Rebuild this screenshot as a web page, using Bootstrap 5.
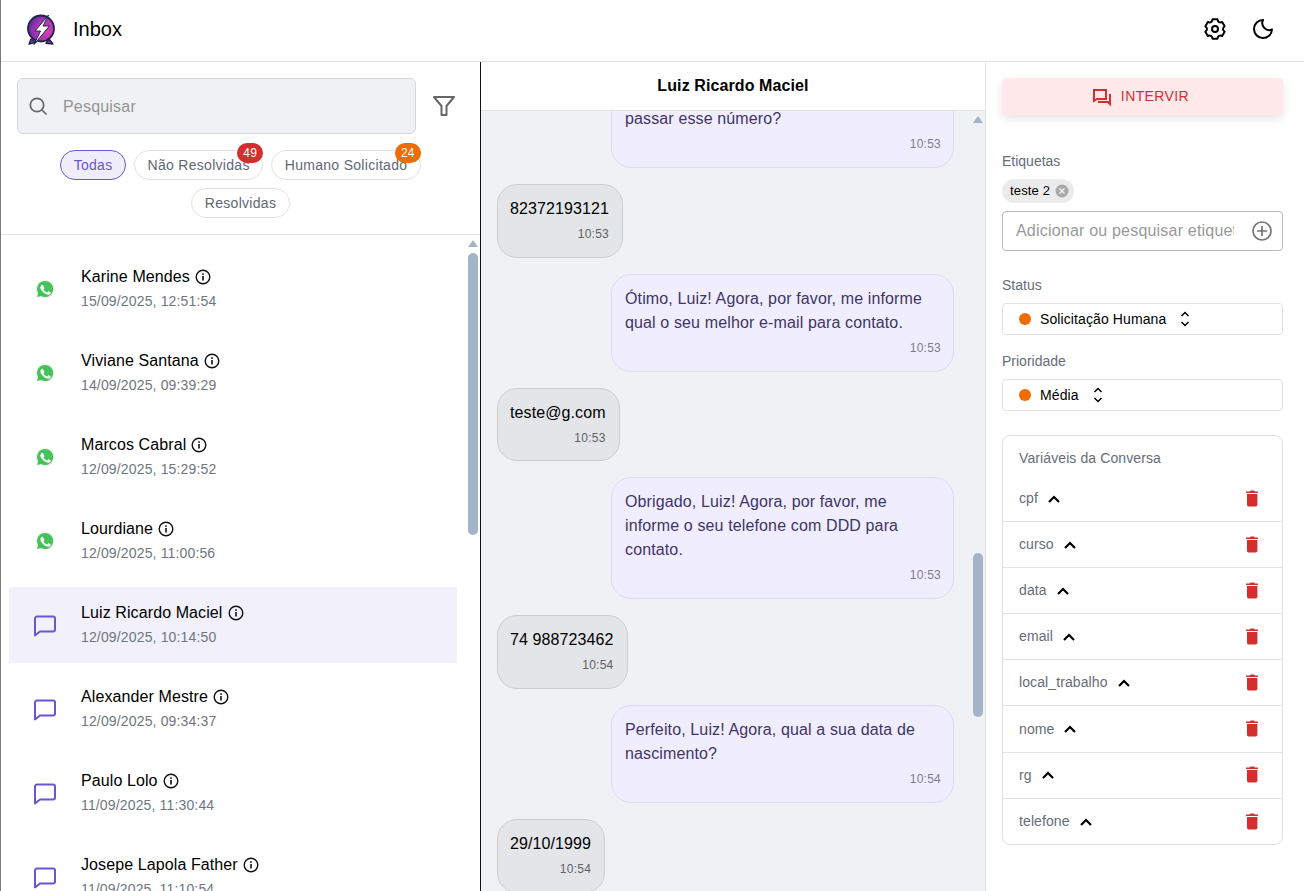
<!DOCTYPE html>
<html lang="pt">
<head>
<meta charset="utf-8">
<title>Inbox</title>
<link href="https://cdn.jsdelivr.net/npm/bootstrap@5.3.0/dist/css/bootstrap.min.css" rel="stylesheet">
<style>
html,body{height:100%;overflow:hidden}
body{font-family:"Liberation Sans",Arial,sans-serif;color:#000;background:#fff;border-left:1px solid #7a7a7a}
.app-shell{height:891px;overflow:hidden}
.top-bar{height:62px;border-bottom:1px solid #e0e0e0;padding:0 29px 3px 25px}
.top-title{font-size:20px;margin-left:17px;line-height:1}
.top-icons{gap:24px}
.panes{height:829px}
.left-pane{width:480px;flex:none;border-right:1px solid #111;position:relative}
.mid-pane{width:505px;flex:none;position:relative;border-right:1px solid #e2e2e2}
.right-pane{flex:1;padding:16px 21px 0 16px;min-width:0}
.filter-head{padding:16px 16px 0 16px;height:173px;border-bottom:1px solid #e2e2e2}
.search-box{width:399px;height:56px;background:#f0f1f5;border:1px solid #d5d6da;border-radius:6px;padding-left:11px;color:#949494;font-size:16px;letter-spacing:.2px}
.search-box span{margin-left:16px;margin-top:1px}
.filter-btn{margin-left:15px}
.chips{margin-top:16px;gap:8px}
.chip-item{position:relative;height:30px;border:1px solid #e2e2e2;border-radius:15px;padding:0 12.500px;font-size:14px;line-height:28px;color:#5f6773;letter-spacing:.3px;background:#fff}
.chip-on{background:#f1eefc;border-color:#6a55d8;color:#6a55d8}
.count-pill{position:absolute;top:-8px;right:-1px;height:20px;min-width:26px;border-radius:10px;color:#fff;font-size:12px;line-height:20px;text-align:center;letter-spacing:.3px}
.pill-red{background:#d32f2f}
.pill-orange{background:#ef6c00}
.convo-list{padding:16px 0 0 8px;overflow:hidden;height:656px}
.convo-row{width:448px;height:76px;margin-bottom:8px;padding:0 0 0 20px}
.convo-row.picked{background:#f2f0fb}
.convo-ico{width:32px;flex:none;display:flex;justify-content:center}
.convo-text{margin-left:20px;margin-top:-3px}
.convo-name{font-size:16px;line-height:24px;display:flex;align-items:center;gap:5px;letter-spacing:.1px}
.convo-date{font-size:14px;line-height:20px;margin-top:2px;color:#6f7682;letter-spacing:.15px}
.fake-track{position:absolute;width:10px}
.track-list{left:467px;top:176px}
.track-chat{left:492px;top:49px}
.fake-up{position:absolute;left:0;width:0;height:0;border-left:5px solid transparent;border-right:5px solid transparent;border-bottom:7px solid #a3b4c8}
.up-list{top:2px}
.up-chat{top:5px}
.fake-thumb{position:absolute;left:0;width:10px;background:#a3b4c8;border-radius:5px}
.thumb-list{top:15px;height:282px}
.thumb-chat{top:442px;height:164px}
.chat-title{height:49px;border-bottom:1px solid #e2e2e2;font-weight:700;font-size:16px;background:#fff;letter-spacing:.1px}
.chat-body{background:#f0f1f5;height:780px;overflow:hidden;padding:0 31px 0 16px}
.bubble-me{align-self:flex-end;width:343px;background:#f0eefe;border:1px solid #dcd8fb;border-radius:20px;padding:12px 12px 13px 13px;color:#3f3565;font-size:16px;line-height:24px;margin-top:16px;letter-spacing:.13px;flex:none}
.bubble-them{align-self:flex-start;background:#e4e5e9;border:1px solid #cdced2;border-radius:20px;padding:12px 13px 13px 12px;font-size:16px;line-height:24px;margin-top:16px;letter-spacing:.1px;flex:none}
.first-cut{margin-top:-40.800px}
.stamp{display:block;text-align:right;font-size:12px;line-height:17.800px;margin-top:5px;color:#5f5f66;letter-spacing:.25px}
.bubble-me .stamp{color:#7f7a92}
.intervene{height:37px;background:#ffe9ea;border-radius:4px;color:#d32f2f;font-size:14px;letter-spacing:.4px;box-shadow:0 4px 10px rgba(0,0,0,.1);gap:9px;border:0;width:100%;padding:0 4px 0 0}
.field-label{font-size:14px;line-height:20px;color:#666d78}
.label-tags{margin-top:36px}
.label-status{margin-top:24px}
.label-priority{margin-top:16px}
.tag-chip{height:24px;background:#ebebeb;border-radius:12px;padding:0 5px 0 8px;font-size:13px;width:72px;gap:5px;letter-spacing:.15px;margin-top:8px;white-space:nowrap}
.tag-chip svg{flex:none}
.tag-input{height:40px;border:1px solid #bbb;border-radius:4px;margin-top:8px;padding:0 10px 0 13px;font-size:16px;color:#999;overflow:hidden;letter-spacing:.2px}
.tag-input span{width:218px;overflow:hidden;white-space:nowrap;display:block}
.pick-box{height:32px;border:1px solid #e2e2e2;border-radius:4px;padding:0 16px;font-size:14px;margin-top:8px;letter-spacing:.1px}
.pick-dot{width:12px;height:12px;border-radius:50%;background:#ef6c00;margin-right:9px}
.pick-arrows{margin-left:13px}
.vars-box{border:1px solid #e2e2e2;border-radius:8px;margin-top:24px;height:410px;overflow:hidden}
.vars-title{font-size:14px;color:#666d78;padding:12px 16px 0;line-height:20px;height:40px;letter-spacing:.1px}
.var-row{height:46.100px;padding:0 22px 0 16px;font-size:14px;color:#666d78;border-bottom:1px solid #e2e2e2;gap:9px;letter-spacing:.1px}
.var-row:last-child{border-bottom:0}
.var-bin{margin-left:auto;margin-bottom:2px}
</style>
</head>
<body>
<div class="app-shell d-flex flex-column">
  <header class="top-bar d-flex align-items-center justify-content-between">
    <div class="d-flex align-items-center">
      <svg width="30" height="33" viewBox="0 0 30 33"><defs><radialGradient id="lg" cx=".75" cy=".6" r=".85"><stop offset="0" stop-color="#d640b0"/><stop offset=".55" stop-color="#a335b8"/><stop offset="1" stop-color="#4b2a8f"/></radialGradient></defs><path d="M5 26 3 31l7-1.800zM23 26l4 5-7-.800z" fill="#8a2fa8" stroke="#1e2547" stroke-width="1.400" stroke-linejoin="round"/><circle cx="15" cy="15.500" r="13" fill="url(#lg)" stroke="#1e2547" stroke-width="1.800"/><path d="M22.500 2 9 18h5.500L8 31.500 23.500 13H17z" fill="#fff" stroke="#1e2547" stroke-width="1" stroke-linejoin="round"/></svg>
      <span class="top-title">Inbox</span>
    </div>
    <div class="d-flex align-items-center top-icons">
      <svg width="24" height="24" viewBox="0 0 24 24" fill="none" stroke="#000" stroke-width="2" stroke-linecap="round" stroke-linejoin="round"><path d="M9.580 2.300H14.420Q15.200 6.460 19.190 5.050L21.610 9.240Q18.400 12 21.610 14.760L19.190 18.950Q15.200 17.540 14.420 21.700H9.580Q8.800 17.540 4.810 18.950L2.390 14.760Q5.600 12 2.390 9.240L4.810 5.050Q8.800 6.460 9.580 2.300z"/><circle cx="12" cy="12" r="3"/></svg>
      <svg width="24" height="24" viewBox="0 0 24 24" fill="none" stroke="#000" stroke-width="2" stroke-linecap="round" stroke-linejoin="round"><path d="M12 3a9 9 0 1 0 9 9.500A7 7 0 0 1 12 3z"/></svg>
    </div>
  </header>
  <div class="panes d-flex">
    <aside class="left-pane">
      <div class="filter-head">
        <div class="d-flex align-items-center">
          <div class="search-box d-flex align-items-center">
            <svg width="18" height="18" viewBox="0 0 18 18" fill="none" stroke="#666" stroke-width="1.700" stroke-linecap="round"><circle cx="8" cy="8" r="6.700"/><path d="m13 13 4 4"/></svg>
            <span>Pesquisar</span>
          </div>
          <svg class="filter-btn" width="26" height="26" viewBox="0 0 26 26" fill="none" stroke="#666" stroke-width="2" stroke-linejoin="round"><path d="M3 4h20l-7.500 9v9h-5v-9z"/></svg>
        </div>
        <div class="chips d-flex flex-wrap justify-content-center">
          <div class="chip-item chip-on">Todas</div>
          <div class="chip-item">Não Resolvidas<span class="count-pill pill-red">49</span></div>
          <div class="chip-item">Humano Solicitado<span class="count-pill pill-orange">24</span></div>
          <div class="chip-item">Resolvidas</div>
        </div>
      </div>
      <div class="convo-list">
        <div class="convo-row d-flex align-items-center"><div class="convo-ico"><svg width="20" height="20" viewBox="0 0 20 20"><use href="#wa"/></svg></div><div class="convo-text"><div class="convo-name">Karine Mendes <svg width="16" height="16"><use href="#inf"/></svg></div><div class="convo-date">15/09/2025, 12:51:54</div></div></div>
        <div class="convo-row d-flex align-items-center"><div class="convo-ico"><svg width="20" height="20" viewBox="0 0 20 20"><use href="#wa"/></svg></div><div class="convo-text"><div class="convo-name">Viviane Santana <svg width="16" height="16"><use href="#inf"/></svg></div><div class="convo-date">14/09/2025, 09:39:29</div></div></div>
        <div class="convo-row d-flex align-items-center"><div class="convo-ico"><svg width="20" height="20" viewBox="0 0 20 20"><use href="#wa"/></svg></div><div class="convo-text"><div class="convo-name">Marcos Cabral <svg width="16" height="16"><use href="#inf"/></svg></div><div class="convo-date">12/09/2025, 15:29:52</div></div></div>
        <div class="convo-row d-flex align-items-center"><div class="convo-ico"><svg width="20" height="20" viewBox="0 0 20 20"><use href="#wa"/></svg></div><div class="convo-text"><div class="convo-name">Lourdiane <svg width="16" height="16"><use href="#inf"/></svg></div><div class="convo-date">12/09/2025, 11:00:56</div></div></div>
        <div class="convo-row picked d-flex align-items-center"><div class="convo-ico"><svg width="24" height="24"><use href="#msg"/></svg></div><div class="convo-text"><div class="convo-name">Luiz Ricardo Maciel <svg width="16" height="16"><use href="#inf"/></svg></div><div class="convo-date">12/09/2025, 10:14:50</div></div></div>
        <div class="convo-row d-flex align-items-center"><div class="convo-ico"><svg width="24" height="24"><use href="#msg"/></svg></div><div class="convo-text"><div class="convo-name">Alexander Mestre <svg width="16" height="16"><use href="#inf"/></svg></div><div class="convo-date">12/09/2025, 09:34:37</div></div></div>
        <div class="convo-row d-flex align-items-center"><div class="convo-ico"><svg width="24" height="24"><use href="#msg"/></svg></div><div class="convo-text"><div class="convo-name">Paulo Lolo <svg width="16" height="16"><use href="#inf"/></svg></div><div class="convo-date">11/09/2025, 11:30:44</div></div></div>
        <div class="convo-row d-flex align-items-center"><div class="convo-ico"><svg width="24" height="24"><use href="#msg"/></svg></div><div class="convo-text"><div class="convo-name">Josepe Lapola Father <svg width="16" height="16"><use href="#inf"/></svg></div><div class="convo-date">11/09/2025, 11:10:54</div></div></div>
      </div>
      <div class="fake-track track-list"><i class="fake-up up-list"></i><i class="fake-thumb thumb-list"></i></div>
    </aside>
    <main class="mid-pane">
      <div class="chat-title d-flex align-items-center justify-content-center">Luiz Ricardo Maciel</div>
      <div class="chat-body d-flex flex-column">
        <div class="bubble-me first-cut">Agora, pode me<br>passar esse número?<span class="stamp">10:53</span></div>
        <div class="bubble-them">82372193121<span class="stamp">10:53</span></div>
        <div class="bubble-me">Ótimo, Luiz! Agora, por favor, me informe qual o seu melhor e-mail para contato.<span class="stamp">10:53</span></div>
        <div class="bubble-them">teste@g.com<span class="stamp">10:53</span></div>
        <div class="bubble-me">Obrigado, Luiz! Agora, por favor, me informe o seu telefone com DDD para contato.<span class="stamp">10:53</span></div>
        <div class="bubble-them">74 988723462<span class="stamp">10:54</span></div>
        <div class="bubble-me">Perfeito, Luiz! Agora, qual a sua data de nascimento?<span class="stamp">10:54</span></div>
        <div class="bubble-them">29/10/1999<span class="stamp">10:54</span></div>
      </div>
      <div class="fake-track track-chat"><i class="fake-up up-chat"></i><i class="fake-thumb thumb-chat"></i></div>
    </main>
    <section class="right-pane">
      <button class="intervene d-flex align-items-center justify-content-center" type="button">
        <svg width="20" height="20" viewBox="0 0 20 20" fill="none" stroke="#d32f2f" stroke-width="2"><path d="M2 3h12v9H5l-3 2z"/><path d="M6 15h10l2 2V7"/></svg>
        INTERVIR
      </button>
      <div class="field-label label-tags">Etiquetas</div>
      <div class="tag-chip d-flex align-items-center"><span>teste 2</span><svg width="14" height="14" viewBox="0 0 14 14"><circle cx="7" cy="7" r="6.500" fill="#aaa"/><path d="m4.500 4.500 5 5m0-5-5 5" stroke="#eee" stroke-width="1.500"/></svg></div>
      <div class="tag-input d-flex align-items-center justify-content-between"><span>Adicionar ou pesquisar etiqueta</span><svg width="20" height="20" viewBox="0 0 20 20" fill="none" stroke="#757575" stroke-width="1.700"><circle cx="10" cy="10" r="9"/><path d="M10 5v10M5 10h10"/></svg></div>
      <div class="field-label label-status">Status</div>
      <div class="pick-box d-flex align-items-center"><i class="pick-dot"></i><span>Solicitação Humana</span><svg class="pick-arrows" width="12" height="18" viewBox="0 0 12 18" fill="none" stroke="#000" stroke-width="1.500"><path d="m2.500 6 3.500-3.500L9.500 6M2.500 12 6 15.500 9.500 12"/></svg></div>
      <div class="field-label label-priority">Prioridade</div>
      <div class="pick-box d-flex align-items-center"><i class="pick-dot"></i><span>Média</span><svg class="pick-arrows" width="12" height="18" viewBox="0 0 12 18" fill="none" stroke="#000" stroke-width="1.500"><path d="m2.500 6 3.500-3.500L9.500 6M2.500 12 6 15.500 9.500 12"/></svg></div>
      <div class="vars-box">
        <div class="vars-title">Variáveis da Conversa</div>
        <div class="var-row d-flex align-items-center"><span>cpf</span><svg width="14" height="10"><use href="#up"/></svg><svg class="var-bin" width="16" height="18"><use href="#bin"/></svg></div>
        <div class="var-row d-flex align-items-center"><span>curso</span><svg width="14" height="10"><use href="#up"/></svg><svg class="var-bin" width="16" height="18"><use href="#bin"/></svg></div>
        <div class="var-row d-flex align-items-center"><span>data</span><svg width="14" height="10"><use href="#up"/></svg><svg class="var-bin" width="16" height="18"><use href="#bin"/></svg></div>
        <div class="var-row d-flex align-items-center"><span>email</span><svg width="14" height="10"><use href="#up"/></svg><svg class="var-bin" width="16" height="18"><use href="#bin"/></svg></div>
        <div class="var-row d-flex align-items-center"><span>local_trabalho</span><svg width="14" height="10"><use href="#up"/></svg><svg class="var-bin" width="16" height="18"><use href="#bin"/></svg></div>
        <div class="var-row d-flex align-items-center"><span>nome</span><svg width="14" height="10"><use href="#up"/></svg><svg class="var-bin" width="16" height="18"><use href="#bin"/></svg></div>
        <div class="var-row d-flex align-items-center"><span>rg</span><svg width="14" height="10"><use href="#up"/></svg><svg class="var-bin" width="16" height="18"><use href="#bin"/></svg></div>
        <div class="var-row d-flex align-items-center"><span>telefone</span><svg width="14" height="10"><use href="#up"/></svg><svg class="var-bin" width="16" height="18"><use href="#bin"/></svg></div>
      </div>
    </section>
  </div>
</div>
<svg width="0" height="0" class="position-absolute">
  <symbol id="wa" viewBox="0 0 20 20"><circle cx="10" cy="10" r="9.500" fill="#eef6ee"/><path d="M10 2a8 8 0 0 0-6.900 12L2 18l4.100-1.100A8 8 0 1 0 10 2z" fill="#46c25a"/><path d="M7.300 5.800c-.3 0-.7.100-1 .5-.4.500-.9 1.100-.9 2.300s.9 2.500 1.100 2.700c.1.200 1.800 2.800 4.300 3.800 2.100.8 2.500.7 3 .6.500-.1 1.500-.6 1.700-1.200.2-.6.200-1.100.1-1.200l-2-1c-.2-.1-.4-.1-.5.100l-.8 1c-.1.200-.3.200-.5.100-.2-.1-1-.4-1.900-1.200-.7-.6-1.200-1.400-1.300-1.600-.1-.2 0-.4.100-.5l.6-.8c.1-.2.100-.3 0-.5l-.8-2c-.1-.4-.4-.5-.7-.6z" fill="#fff"/></symbol>
  <symbol id="msg" viewBox="0 -1 24 24"><path d="M2 4.500A2 2 0 0 1 4 2.500h16a2 2 0 0 1 2 2v11a2 2 0 0 1-2 2H7L2 21.500z" fill="none" stroke="#6a55d8" stroke-width="2" stroke-linejoin="round"/></symbol>
  <symbol id="inf" viewBox="0 0 16 16"><circle cx="8" cy="8" r="6.800" fill="none" stroke="#111" stroke-width="1.400"/><rect x="7.200" y="7" width="1.600" height="4.500" fill="#111"/><rect x="7.200" y="4.300" width="1.600" height="1.600" fill="#111"/></symbol>
  <symbol id="up" viewBox="0 0 14 10"><path d="m2 8 5-5 5 5" fill="none" stroke="#000" stroke-width="2.200"/></symbol>
  <symbol id="bin" viewBox="0 0 16 18"><path d="M3 5h10.400v10.800a1.600 1.600 0 0 1-1.600 1.600H4.600A1.600 1.600 0 0 1 3 15.800z" fill="#d32f2f"/><path d="M2 2.500h3.500l1-1h3.500l1 1H14v1.500H2z" fill="#d32f2f"/></symbol>
</svg>
<script src="https://cdn.jsdelivr.net/npm/bootstrap@5.3.0/dist/js/bootstrap.bundle.min.js"></script>
</body>
</html>
